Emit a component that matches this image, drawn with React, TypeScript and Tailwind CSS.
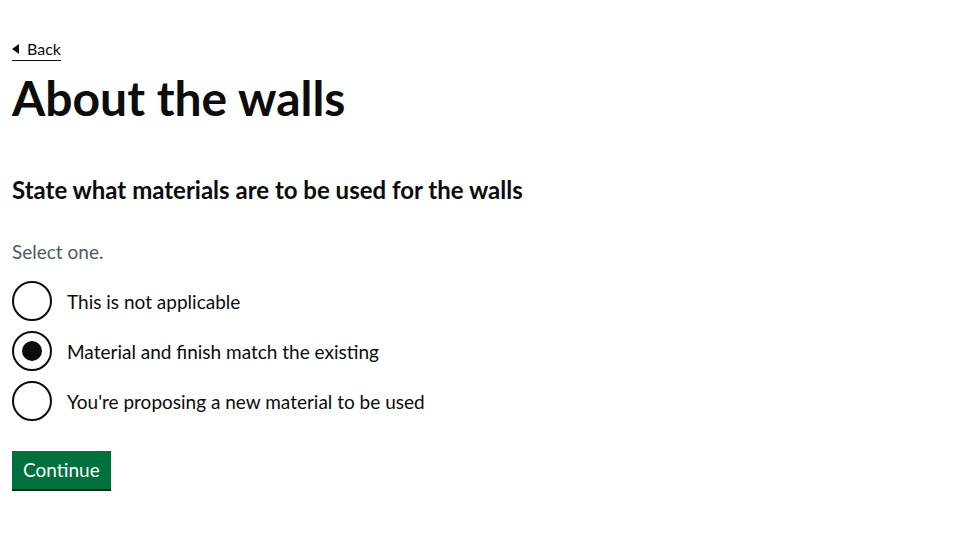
import React from "react";

const font = { fontFamily: 'Lato, Arial, sans-serif' };

function Radio({ label, checked }: { label: string; checked?: boolean }) {
  return (
    <div className="flex items-center h-[40px] mb-[10px]">
      <div className="w-[40px] h-[40px] rounded-full border-2 border-[#0b0c0c] flex items-center justify-center shrink-0">
        {checked && <div className="w-[20px] h-[20px] rounded-full bg-[#0b0c0c]" />}
      </div>
      <span className="ml-[15px] text-[19px] leading-[25px] text-[#0b0c0c]">{label}</span>
    </div>
  );
}

export default function App() {
  return (
    <div className="min-h-[554px] bg-white text-[#0b0c0c] px-[12px]" style={font}>
      <div className="pt-[36px]">
        <a className="inline-flex items-center border-b border-[#0b0c0c] text-[16px] leading-[20px] pb-[1px] text-[#0b0c0c]">
          <svg width="7" height="10" viewBox="0 0 7 10" className="mr-[8px]">
            <polygon points="7,0 7,10 0,5" fill="#0b0c0c" />
          </svg>
          Back
        </a>
      </div>
      <h1 className="text-[48px] leading-[50px] font-bold mt-[12px]">About the walls</h1>
      <h2 className="text-[24px] leading-[30px] font-bold mt-[52px]">
        State what materials are to be used for the walls
      </h2>
      <p className="text-[19px] leading-[25px] text-[#505a5f] mt-[34px]">Select one.</p>
      <div className="mt-[17px]">
        <Radio label="This is not applicable" />
        <Radio label="Material and finish match the existing" checked />
        <Radio label="You're proposing a new material to be used" />
      </div>
      <button className="mt-[20px] bg-[#00703c] text-white text-[19px] leading-[19px] px-[11px] pt-[9px] pb-[10px] shadow-[0_2px_0_#002d18]">
        Continue
      </button>
    </div>
  );
}
